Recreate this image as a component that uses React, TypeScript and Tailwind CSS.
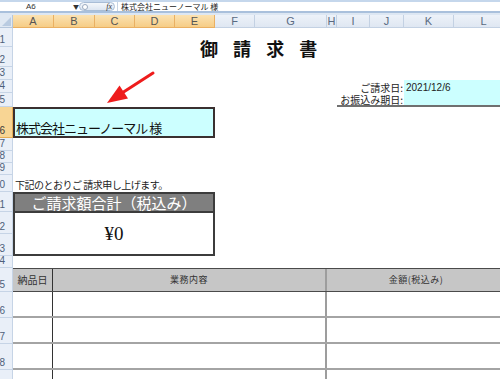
import React from "react";

type Col = { l: string; w: string; sel: boolean };

const cols: Col[] = [
  { l: "A", w: "w-[41px]", sel: true },
  { l: "B", w: "w-[41px]", sel: true },
  { l: "C", w: "w-[40px]", sel: true },
  { l: "D", w: "w-[40px]", sel: true },
  { l: "E", w: "w-[40px]", sel: true },
  { l: "F", w: "w-[40px]", sel: false },
  { l: "G", w: "w-[72px]", sel: false },
  { l: "H", w: "w-[10px]", sel: false },
  { l: "I", w: "w-[33px]", sel: false },
  { l: "J", w: "w-[34px]", sel: false },
  { l: "K", w: "w-[50px]", sel: false },
  { l: "L", w: "w-[60px]", sel: false },
];

function RowHead({ n, h, sel }: { n: number; h: string; sel?: boolean }) {
  return (
    <div
      className={`${h} w-[13px] shrink-0 overflow-hidden border-b border-r flex items-end justify-end pr-[7px] pb-[1px] text-[10px] leading-[10px] font-['Liberation_Sans',sans-serif] ${
        sel
          ? "bg-[#f8d594] border-[#e6ad55] text-[#3a3a3a]"
          : "bg-[#e9eff8] border-[#c6d4e6] text-[#4d5f7a]"
      }`}
    >
      <span className="whitespace-nowrap">{n}</span>
    </div>
  );
}

function TableRow({ n }: { n: number }) {
  return (
    <div className="flex h-[26px]">
      <RowHead n={n} h="h-[26px]" />
      <div className="flex flex-1 border-b-2 border-[#a4a4a4]">
        <div className="w-[40px] border-r border-[#333]" />
        <div className="w-[274px] border-r-2 border-[#9d9d9d]" />
        <div className="flex-1" />
      </div>
    </div>
  );
}

export default function App() {
  return (
    <div className="relative w-[500px] h-[379px] overflow-hidden bg-white font-['Noto_Sans_CJK_JP',sans-serif] text-[#111]">
      {/* formula bar */}
      <div className="flex flex-col h-[15px]">
        <div className="h-[2px] bg-[#c5d7ec]" />
        <div className="h-[9px] bg-white flex items-center text-[8px] leading-[9px]">
          <div className="w-[73px] pl-[26px] font-['Liberation_Sans',sans-serif] text-[#333]">A6</div>
          <div className="w-[6px] text-[6px] text-[#333]">▼</div>
          <div className="w-[36px] h-[9px] rounded-full border border-[#a9bdd6] bg-gradient-to-b from-[#f4f7fb] to-[#dde6f1] flex items-center justify-between px-[2px]">
            <div className="w-[6px] h-[6px] rounded-full border border-[#9aaac0] bg-white" />
            <span className="italic font-['Liberation_Serif',serif] text-[8px] text-[#333]">fx</span>
          </div>
          <div className="w-[1px] h-[9px] bg-[#c8d4e3] ml-[2px]" />
          <div className="pl-[3px] text-[8px] text-[#222] whitespace-nowrap">株式会社ニューノーマル 様</div>
        </div>
        <div className="h-[2px] bg-[#a9c0dc]" />
        <div className="h-[2px] bg-[#dde7f3]" />
      </div>

      {/* column headers */}
      <div className="flex h-[13px]">
        <div className="w-[13px] shrink-0 bg-[#dfe8f3] border-r border-b border-[#b4c6dc] flex items-end justify-end p-[1px]">
          <svg width="9" height="9" viewBox="0 0 9 9">
            <polygon points="9,0 9,9 0,9" fill="#b9cbe1" />
          </svg>
        </div>
        {cols.map((c) => (
          <div
            key={c.l}
            className={`${c.w} shrink-0 border-r border-b flex items-center justify-center text-[11px] leading-[11px] font-['Liberation_Sans',sans-serif] ${
              c.sel
                ? "bg-gradient-to-b from-[#fbe2b2] to-[#f6cd86] border-[#eab062] text-[#555]"
                : "bg-gradient-to-b from-[#edf2f9] to-[#dfe7f2] border-[#c3d1e3] text-[#5a6a82]"
            }`}
          >
            {c.l}
          </div>
        ))}
      </div>

      {/* rows 1-2: title */}
      <div className="flex">
        <div className="flex flex-col">
          <RowHead n={1} h="h-[19px]" />
          <RowHead n={2} h="h-[20px]" />
        </div>
        <div className="flex-1 flex items-center pl-[187px]">
          <span className="text-[18px] leading-[20px] font-bold tracking-[5.5px] whitespace-nowrap">御 請 求 書</span>
        </div>
      </div>

      {/* row 3 */}
      <div className="flex">
        <RowHead n={3} h="h-[13px]" />
      </div>

      {/* rows 4-5 */}
      <div className="flex">
        <div className="flex flex-col">
          <RowHead n={4} h="h-[13px]" />
          <RowHead n={5} h="h-[14px]" />
        </div>
        <div className="flex-1 flex">
          <div className="w-[324px] shrink-0" />
          <div className="w-[67px] shrink-0 flex flex-col border-b-2 border-[#707070] text-[10px] leading-[10px] text-right pr-[1px] text-[#222]">
            <div className="h-[13px] flex items-end justify-end">ご請求日:</div>
            <div className="h-[12px] flex items-end justify-end">お振込み期日:</div>
          </div>
          <div className="flex-1 flex flex-col border-b-2 border-[#707070] bg-[#ccffff] text-[10px] leading-[10px] pl-[2px] font-['Liberation_Sans',sans-serif] text-[#222]">
            <div className="h-[13px] flex items-end">2021/12/6</div>
          </div>
        </div>
      </div>

      {/* row 6 */}
      <div className="flex">
        <RowHead n={6} h="h-[31px]" sel />
        <div className="flex-1">
          <div className="w-[202px] h-[31px] border-2 border-[#3a3030] bg-[#ccffff] flex items-end pl-[1px] pb-[1px]">
            <span className="text-[13px] leading-[14px] tracking-[-1px] whitespace-nowrap">株式会社ニューノーマル 様</span>
          </div>
        </div>
      </div>

      {/* rows 7-9 */}
      <div className="flex"><RowHead n={7} h="h-[13px]" /></div>
      <div className="flex"><RowHead n={8} h="h-[12px]" /></div>
      <div className="flex"><RowHead n={9} h="h-[12px]" /></div>

      {/* row 10 */}
      <div className="flex">
        <RowHead n={10} h="h-[17px]" />
        <div className="flex-1 flex items-end pl-[2px] pb-[2px]">
          <span className="text-[10px] leading-[11px] tracking-[-0.5px] whitespace-nowrap text-[#222]">下記のとおりご 請求申し上げます。</span>
        </div>
      </div>

      {/* rows 11-13: total box */}
      <div className="flex">
        <div className="flex flex-col">
          <RowHead n={11} h="h-[20px]" />
          <RowHead n={12} h="h-[22px]" />
          <RowHead n={13} h="h-[22px]" />
        </div>
        <div className="flex-1">
          <div className="w-[202px] h-[64px] border-2 border-[#3c3c3c] flex flex-col">
            <div className="h-[19px] bg-[#7f7f7f] border-b-2 border-[#3c3c3c] flex items-center justify-center text-white text-[15px] leading-[17px] whitespace-nowrap">
              ご請求額合計（税込み）
            </div>
            <div className="flex-1 flex items-center justify-center text-[19px] leading-[20px] font-['Liberation_Serif',serif] text-[#111]">
              ¥0
            </div>
          </div>
        </div>
      </div>

      {/* row 14 */}
      <div className="flex"><RowHead n={14} h="h-[12px]" /></div>

      {/* row 15: table header */}
      <div className="flex h-[24px]">
        <RowHead n={15} h="h-[24px]" />
        <div className="flex flex-1 bg-[#c6c6c6] border-t border-b border-[#4a4a4a] text-[#333]">
          <div className="w-[40px] border-r border-[#333] flex items-center justify-center text-[10px] leading-[12px] whitespace-nowrap">納品日</div>
          <div className="w-[274px] border-r-2 border-[#9d9d9d] flex items-center justify-center text-[9px] leading-[12px] tracking-[0.5px] whitespace-nowrap">業務内容</div>
          <div className="w-[178px] shrink-0 flex items-center justify-center text-[9px] leading-[12px] tracking-[0.5px] whitespace-nowrap">金額(税込み)</div>
        </div>
      </div>

      <TableRow n={16} />
      <TableRow n={17} />
      <TableRow n={18} />
      <TableRow n={19} />

      {/* red arrow annotation */}
      <svg className="absolute left-0 top-0 pointer-events-none" width="500" height="379" viewBox="0 0 500 379">
        <line x1="153" y1="73" x2="122" y2="93" stroke="#ee1c1c" strokeWidth="3" strokeLinecap="round" />
        <polygon points="107,103 128,98.5 119.5,85.5" fill="#ee1c1c" />
      </svg>
    </div>
  );
}
